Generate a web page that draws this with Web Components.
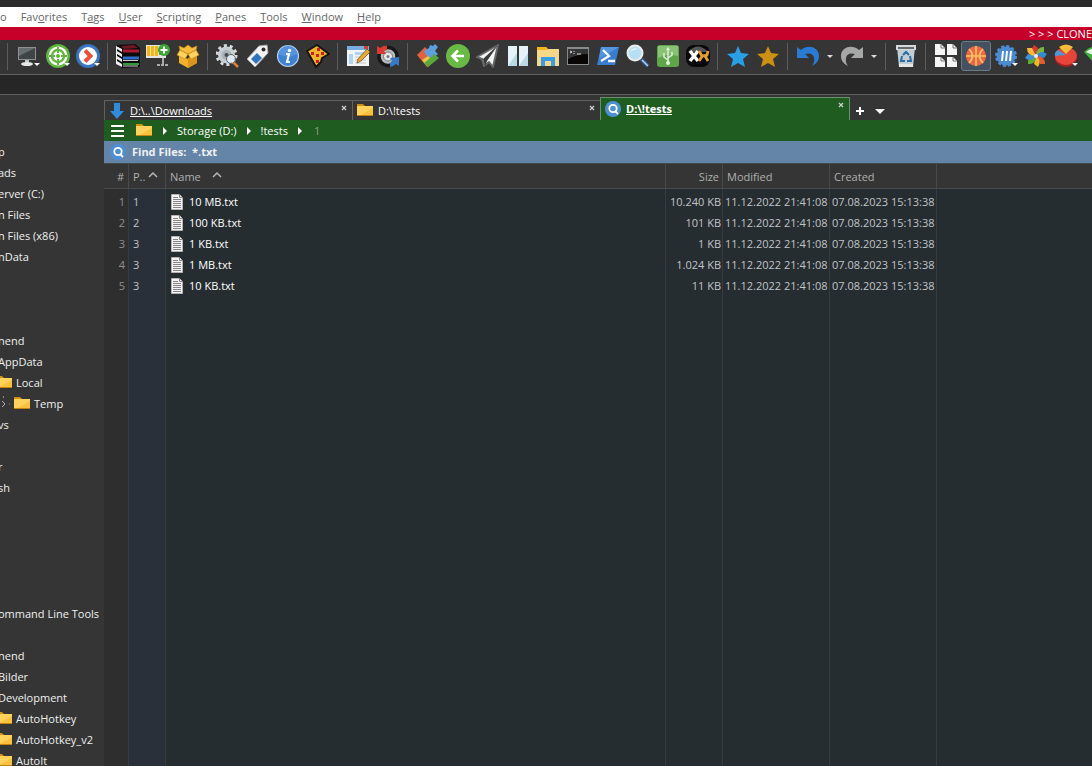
<!DOCTYPE html>
<html lang="en">
<head>
<meta charset="utf-8">
<title>D:\!tests</title>
<style>
  html, body {
    height: 100%;
    margin: 0;
  }
  body {
    overflow: hidden;
    background: #343534;
    color: #f0f0f0;
    font: 11px/16px "Open Sans", "Noto Sans", sans-serif;
  }
</style>
</head>
<body>
<file-manager></file-manager>

<script>
const ICONS = {
  monitor: `<path d="M2 3h18v13H2z" fill="#8d9192"/><path d="M3 4h16v11H3z" fill="#3f4446"/><path d="M3 4h16L3 12z" fill="#686d6f"/><path d="M9 16h4v3H9z" fill="#c5c8c9"/><ellipse cx="11" cy="20" rx="6" ry="2" fill="#e6e8e8"/>`,
  target: `<circle cx="12" cy="12" r="12" fill="#5fb53c"/><circle cx="12" cy="12" r="9.5" fill="#fff"/><circle cx="12" cy="12" r="6" fill="none" stroke="#5fb53c" stroke-width="2.4"/><circle cx="12" cy="12" r="2" fill="#5fb53c"/><path d="M12 3v6M12 15v6M3 12h6M15 12h6" stroke="#5fb53c" stroke-width="2"/>`,
  go: `<circle cx="12" cy="12" r="12" fill="#3777c4"/><circle cx="12" cy="12" r="9" fill="#fff"/><path d="M9 6.5l5.5 5.5L9 17.5" fill="none" stroke="#ea5138" stroke-width="4"/>`,
  books: `<path d="M1 1l18-1 5 4v19l-18 1-5-4z" fill="#0c0c0c"/><path d="M5 2l13-1 4 3-14 1z" fill="#6e1722"/><path d="M0 2l6 3v3L1 5v2l5 3v3l-5-3v2l5 3v3l-5-3v2l5 3v3l-6-3z" fill="#eee"/><path d="M7 7h16" stroke="#b0182f" stroke-width="3"/><path d="M7 14h16" stroke="#2f6fca" stroke-width="3"/><path d="M7 20h16" stroke="#2f9b3a" stroke-width="2"/><path d="M7 16.500h15M7 22h15" stroke="#c9ccce"/>`,
  addfile: `<path d="M0 1h20v13H0z" fill="#e4e4e2"/><path d="M1 2h11v10H1z" fill="#f3b51c"/><path d="M4.500 2v10M8.500 2v10" stroke="#ffe590"/><path d="M13 3h5v8h-5z" fill="#888"/><path d="M17 14v6" stroke="#aaa" stroke-width="2"/><path d="M11 21h12" stroke="#aaa" stroke-width="2" stroke-dasharray="3 1"/><circle cx="18" cy="6" r="6" fill="#3ba535"/><path d="M18 2.500v7M14.500 6h7" stroke="#fff" stroke-width="2"/>`,
  box: `<path d="M3 11l9 4 9-4v8l-9 5-9-5z" fill="#f0b12a"/><path d="M12 14l9-4v9l-9 5z" fill="#dc941b"/><path d="M1 11l3-5 8 4-3 5zM23 11l-3-5-8 4 3 5z" fill="#ffd45c" stroke="#c98a17" stroke-width=".6"/><path d="M4 6L3 2l5 2 4-3 4 3 5-2-1 4-8 4z" fill="#f5bd39" stroke="#c98a17" stroke-width=".6"/>`,
  gear: `<circle cx="10.500" cy="11" r="8.500" fill="#c7ced2"/><circle cx="10.500" cy="11" r="9.500" fill="none" stroke="#d8dee0" stroke-width="3" stroke-dasharray="3 2.970"/><circle cx="10.500" cy="11" r="5" fill="#a9b2b8"/><circle cx="10.500" cy="11" r="2" fill="#454a4d"/><path d="M17 18l5 5" stroke="#db823a" stroke-width="2.500"/><circle cx="15" cy="15" r="4.500" fill="#e6f2fa" fill-opacity=".8" stroke="#5f666b"/>`,
  tag: `<path d="M1 15L13 2l8-1 1 8-13 14z" fill="#f4f4f4" stroke="#a5a8aa"/><path d="M5 15l6-6 5 5-6 6z" fill="#2d75bf"/><circle cx="17.500" cy="5.500" r="2" fill="#2b2b2b"/>`,
  info: `<circle cx="12" cy="12" r="10.500" fill="#3c83d7" stroke="#b7cce8" stroke-width="1.200"/><path d="M3 10a9 9 0 0 1 18 0q-9 5-18 0" fill="#6ba6e8" opacity=".5"/><circle cx="13.500" cy="6.500" r="1.700" fill="#fff"/><path d="M10 10h3l-2 8h3" fill="none" stroke="#fff" stroke-width="2.200"/>`,
  pizza: `<path d="M11 1l12 9-7 4-1 4-5 5L1 7z" fill="#f5b327" stroke="#151515" stroke-width="2" stroke-linejoin="round"/><path d="M11 4h3v3h-3zM5 8h3v3H5zM15 8h3v3h-3zM10 10h3v3h-3zM10 16h3v3h-3z" fill="#cb1f1f"/>`,
  edit: `<path d="M1 2h22v20H1z" fill="#f2f4f5"/><path d="M1 2h22v4H1z" fill="#77aee0"/><path d="M18 2h4v3h-4z" fill="#d83b31"/><path d="M3 10h4v10H3zM9 8h11v3H9z" fill="#aed5f2"/><path d="M9 13h11M9 16h11M9 19h11" stroke="#c5c9cb"/><path d="M11 19l1-4L21 5l3 3-9 9z" fill="#eba92d" stroke="#765216" stroke-width=".8"/>`,
  sync: `<circle cx="12" cy="12.500" r="9" fill="#b9bcbd" stroke="#181818" stroke-width="3.500"/><circle cx="12" cy="12.500" r="4.500" fill="#e8e8e8" stroke="#777"/><circle cx="12" cy="12.500" r="1.500" fill="#777"/><path d="M1 10V2l3 2q4-3 7-2v4l-3 1 2 3z" fill="#dc3931"/><path d="M23 13v9l-3-2q-3 3-6 3v-4l2-2-2-3z" fill="#3778c7"/>`,
  puzzle: `<path d="M1 11l8-8 5 5-3 4 4 5-4 6z" fill="#e3623d"/><path d="M8 7l5-3 1-3 3 1 2-2 3 3-3 4 3 3-7 6-4-4z" fill="#5b9fdf"/><path d="M6 16l6-4 5 5-5 6z" fill="#f0c242"/><path d="M13 15l5-5 5 4-11 9-4-4z" fill="#58a83a"/>`,
  back: `<circle cx="12" cy="12" r="12" fill="#69b945"/><path d="M18 12H7M12 6.500L6.500 12l5.500 5.500" fill="none" stroke="#fff" stroke-width="2.600"/>`,
  plane: `<path d="M22 1L1 13l5 2 2 7 5-4 4 5z" fill="#f4f4f4" stroke="#646667" stroke-width="2" stroke-linejoin="round"/><path d="M22 1L7 15l2 7 2-5z" fill="#3a3a3a"/>`,
  columns: `<path d="M2 2h9v20H2zM13 2h9v20h-9z" fill="#e5f2f8"/><path d="M2 22L11 9v13zM13 22l9-13v13z" fill="#b9d9e6"/>`,
  explorer: `<path d="M1 3h9l2 2h11v17H1z" fill="#f7d788"/><path d="M1 3h9l2 3H1z" fill="#f2b71f"/><path d="M5 13h14v9h-4v-5H9v5H5z" fill="#35a0e8"/>`,
  terminal: `<path d="M1 3h22v18H1z" fill="#858b8d"/><path d="M2 5h20v15H2z" fill="#090606"/><path d="M2 5h20v5q-10 0-20 5z" fill="#353535"/><path d="M4 7l2 1-2 1M8 7v1M8 9v1M11 10h4" fill="none" stroke="#ddd"/>`,
  shell: `<path d="M5 3h18l-4 18H1z" fill="#397dd0"/><path d="M5 3h18L3 15z" fill="#5396df"/><path d="M7 6l6 6-8 5M12 17h7" fill="none" stroke="#fff" stroke-width="2.300"/>`,
  search: `<path d="M15 15l7 7" stroke="#2f5687" stroke-width="4"/><path d="M16 16l6 6" stroke="#b9d0e5" stroke-width="1.500"/><circle cx="9" cy="9" r="7.500" fill="#b8e0f5" stroke="#ececec" stroke-width="2"/><path d="M4 8q3-5 8-3-5 0-8 3" fill="#fff"/>`,
  usb: `<rect x="1" y="1" width="22" height="22" rx="3" fill="#5fa64b"/><path d="M2 2h20v10Q12 8 2 14z" fill="#88c375"/><path d="M12 20V5M12 16l-4-3V9M12 14l4-3V8" fill="none" stroke="#dfedda" stroke-width="1.500"/><circle cx="12" cy="19" r="2" fill="#e5f0e1"/><path d="M10 6l2-3 2 3z" fill="#e5f0e1"/>`,
  tools: `<rect x="0" y="1" width="24" height="22" rx="8" fill="#090909"/><path d="M2 8q10-11 20 0z" fill="#555"/><path d="M4 7l8 10M12 7L4 17" stroke="#fff" stroke-width="3.500"/><path d="M13 7l3 5 5-1 1-4M17 11l-4 6M19 12l3 5" fill="none" stroke="#e3a02c" stroke-width="2.800"/>`,
  bluestar: `<path d="M12 2l3 7 8 1-6 5 2 8-7-4-7 4 2-8-6-5 8-1z" fill="#27a0e8"/>`,
  goldstar: `<path d="M12 2l3 7 8 1-6 5 2 8-7-4-7 4 2-8-6-5 8-1z" fill="#cd9013"/>`,
  undo: `<path d="M1 3v11h12l-4-4q8-2 9 4 1 4-2 8 8-4 7-11C22 3 12 0 5 6z" fill="#2a7bd4"/>`,
  redo: `<path d="M23 3v11H11l4-4q-8-2-9 4-1 4 2 8-8-4-7-11C2 3 12 0 19 6z" fill="#a6a8a8"/>`,
  recycle: `<path d="M3 3h18l-2 20H5z" fill="#c3ced4"/><path d="M2 1h20v5H2z" fill="#d6d9d9"/><path d="M4 3h16v2H4z" fill="#63696b"/><path d="M5 20h14v3H5z" fill="#e5e7e7"/><path d="M9 11l3-3 3 3M16 12l1 5h-4M11 17H7l1-5" fill="none" stroke="#276fa5" stroke-width="2"/>`,
  pages: `<path d="M1 0h6l4 4v7H1zM13 0h6l4 4v7H13zM1 13h6l4 4v6H1zM13 13h6l4 4v6H13z" fill="#f4f4f4"/><path d="M7 0v4h4M19 0v4h4M7 13v4h4M19 13v4h4" fill="none" stroke="#747474"/>`,
  ball: `<circle cx="12" cy="12" r="10" fill="#ee6848"/><path d="M12 2v20M2 12h20M5 5q7 7 0 14M19 5q-7 7 0 14" fill="none" stroke="#fbc45c" stroke-width="1.700"/>`,
  badge: `<circle cx="12" cy="12" r="9.500" fill="#4a8bd3"/><circle cx="12" cy="12" r="9.500" fill="none" stroke="#4a8bd3" stroke-width="3" stroke-dasharray="3 1.970"/><path d="M9 7L8 17M13 7l-1 10M17 7l-1 10" stroke="#fff" stroke-width="2"/>`,
  flower: `<path d="M12 12Q5 7 10 1l4 3z" fill="#e0352e"/><path d="M12 12Q12 3 20 3v5z" fill="#79b63d"/><path d="M12 12q5-7 11-2l-3 4z" fill="#358ad2"/><path d="M12 12q9 0 9 8h-5z" fill="#e45937"/><path d="M12 12q6 5 2 11l-4-3z" fill="#f1b72b"/><path d="M12 12q0 9-8 8v-4z" fill="#63ab39"/><path d="M12 12Q7 19 1 14l3-4z" fill="#3f92d6"/><path d="M12 12Q3 12 3 4h5z" fill="#f2bd38"/><circle cx="12" cy="12" r="2" fill="#eee"/>`,
  pie: `<ellipse cx="12" cy="14" rx="11" ry="9" fill="#a81f1d"/><ellipse cx="12" cy="12" rx="11" ry="9" fill="#e7443a"/><path d="M12 11L1 12Q0 8 4 6z" fill="#4d96d9"/><path d="M12 10L5 3q7-5 14 0z" fill="#f8bd37"/>`,
  gem: `<path d="M0 8q6-6 12-6t12 6L12 21z" fill="#3faf3c"/><path d="M2 8q5-4 10-4t10 4l-10 4z" fill="#eaf6e7"/>`,
  folder: `<path d="M0 1h6l2 2v3H0z" fill="#cf900f"/><path d="M0 3h16v10H0z" fill="#ffd35b"/><path d="M16 5v8H2z" fill="#f8c23c"/><path d="M0 12.500h16" stroke="#c4830e"/>`,
  down: `<path d="M5 0h6v8h4l-7 8-7-8h4z" fill="#2d8ce0"/>`,
  find: `<circle cx="8" cy="8" r="8" fill="#4f8fd4"/><circle cx="8" cy="7.500" r="3.700" fill="none" stroke="#fff" stroke-width="1.800"/><path d="M10 10l3 3" stroke="#fff" stroke-width="1.800"/>`,
  text: `<path d="M1.500 .5h8l3 3v12h-11z" fill="#f4f4f4" stroke="#b5b5b5"/><path d="M3 3.500h5M3 5.500h8M3 7.500h8M3 9.500h8M3 11.500h8M3 13.500h8" stroke="#858585"/><path d="M9.500 0v3.500H13" fill="none" stroke="#858585"/>`,
  bars: `<path d="M1 3h13M1 8h13M1 13h13" stroke="#fff" stroke-width="2"/>`,
  plus: `<path d="M8 4v8M4 8h8" stroke="#fff" stroke-width="2"/>`,
  caret: `<path d="M3 6h10l-5 5z" fill="#fff"/>`,
  next: `<path d="M6 4v8l4-4z" fill="#fff"/>`,
  sort: `<path d="M4 8l4-4 4 4" fill="none" stroke="#b5b5b5" stroke-width="1.500"/>`,
  close: `<path d="M6 5l4 4M10 5l-4 4" stroke="#d0d0d0" stroke-width="1.200"/>`,
  branch: `<path d="M7.500 0v2M13 8h1" stroke="#888"/><path d="M6 5l3 3-3 3" fill="none" stroke="#b5b5b5"/>`
};

class AppIcon extends HTMLElement {
  connectedCallback() {
    const size = this.getAttribute('size') || 16;
    this.attachShadow({ mode: 'open' }).innerHTML = `
      <style>
        :host { display: block; flex: none; }
        svg { display: block; }
      </style>
      <svg width="${size}" height="${size}" viewBox="0 0 ${size} ${size}" aria-hidden="true">${ICONS[this.getAttribute('name')]}</svg>
    `;
  }
}
customElements.define('app-icon', AppIcon);

class MenuBar extends HTMLElement {
  connectedCallback() {
    const items = ['o', 'Fav<u>o</u>rites', 'T<u>a</u>gs', '<u>U</u>ser', '<u>S</u>cripting', '<u>P</u>anes', '<u>T</u>ools', '<u>W</u>indow', '<u>H</u>elp'];
    this.attachShadow({ mode: 'open' }).innerHTML = `
      <style>
        :host {
          display: block;
          background: #fff;
          border-top: 7px solid #2b2b2b;
        }
        nav { display: flex; gap: 14px; height: 20px; }
        button {
          border: 0;
          padding: 0;
          background: none;
          color: #666;
          font: 11px/20px "Open Sans", sans-serif;
        }
      </style>
      <nav>${items.map(item => `<button>${item}</button>`).join('')}</nav>
    `;
  }
}
customElements.define('menu-bar', MenuBar);

class ToolButton extends HTMLElement {
  connectedCallback() {
    const name = this.getAttribute('icon');
    this.attachShadow({ mode: 'open' }).innerHTML = `
      <style>
        :host { display: block; flex: none; }
        button {
          position: relative;
          display: grid;
          place-items: center;
          width: 30px;
          height: 30px;
          padding: 0;
          border: 1px solid transparent;
          border-radius: 3px;
          background: none;
        }
        :host([active]) button { background: #435260; border-color: #6c7b88; }
        .drop {
          position: absolute;
          right: 2px;
          bottom: 4px;
          border: 3px solid transparent;
          border-top-color: #fff;
          border-bottom: 0;
        }
      </style>
      <button aria-label="${name}">
        <app-icon name="${name}" size="24"></app-icon>
        ${this.hasAttribute('menu') ? '<span class="drop"></span>' : ''}
      </button>
    `;
  }
}
customElements.define('tool-button', ToolButton);

class ToolBar extends HTMLElement {
  connectedCallback() {
    // "|" separator, "v" split arrow, "*" menu arrow on the icon, "!" pressed
    const layout = '| monitor* target* go* | books addfile box | gear tag info pizza | edit sync | puzzle back plane columns explorer terminal shell search usb tools | bluestar goldstar | undo v redo v | recycle | pages ball! badge* flower pie* gem';
    const items = layout.split(' ').map(item => {
      if (item === '|') return '<i class="line"></i>';
      if (item === 'v') return '<button class="split" aria-label="History"></button>';
      const flags = (item.endsWith('*') ? 'menu' : '') + (item.endsWith('!') ? 'active' : '');
      return `<tool-button icon="${item.replace(/[*!]/, '')}" ${flags}></tool-button>`;
    });
    this.attachShadow({ mode: 'open' }).innerHTML = `
      <style>
        :host {
          display: block;
          background: #343534;
          border-bottom: 1px solid #606060;
        }
        .notice {
          height: 13px;
          padding-left: 8px;
          background: #c60029;
          color: #fff;
          line-height: 13px;
          text-align: right;
          white-space: nowrap;
        }
        .tools {
          display: flex;
          align-items: center;
          padding: 1px 0 3px 3px;
          overflow: hidden;
        }
        .line {
          flex: none;
          width: 1px;
          height: 27px;
          margin: 0 5px 0 4px;
          background: #5c5c5c;
        }
        .split {
          flex: none;
          width: 14px;
          height: 30px;
          padding: 0;
          border: 0;
          background: none;
          display: grid;
          place-items: center;
        }
        .split::before {
          content: "";
          border: 3px solid transparent;
          border-top-color: #ddd;
          border-bottom: 0;
        }
      </style>
      <div class="notice">&gt; &gt; &gt; CLONE</div>
      <div class="tools">${items.join('')}</div>
    `;
  }
}
customElements.define('tool-bar', ToolBar);

class FolderTree extends HTMLElement {
  connectedCallback() {
    const rows = ['p', 'ads', 'erver (C:)', 'n Files', 'n Files (x86)', 'nData', '', '', '', 'nend', 'AppData', '+Local', '>Temp', 'vs', '', 'r', 'sh', '', '', '', '', '', 'ommand Line Tools', '', 'nend', 'Bilder', 'Development', '+AutoHotkey', '+AutoHotkey_v2', '+AutoIt'];
    const html = rows.map(row => {
      if (row[0] === '+') return `<li class="folder"><app-icon name="folder"></app-icon>${row.slice(1)}</li>`;
      if (row[0] === '>') return `<li class="folder"><app-icon name="branch"></app-icon><app-icon name="folder"></app-icon>${row.slice(1)}</li>`;
      return `<li>${row}</li>`;
    });
    this.attachShadow({ mode: 'open' }).innerHTML = `
      <style>
        :host {
          display: block;
          overflow: hidden;
          background: #343534;
        }
        ul {
          list-style: none;
          margin: 0 0 0 -2px;
          padding: 46px 0 0;
        }
        li {
          display: flex;
          align-items: center;
          height: 21px;
          white-space: nowrap;
        }
        .folder { gap: 4px; margin-left: -2px; }
        .folder app-icon + app-icon { margin-left: -2px; }
      </style>
      <ul>${html.join('')}</ul>
    `;
  }
}
customElements.define('folder-tree', FolderTree);

class FolderTab extends HTMLElement {
  connectedCallback() {
    this.attachShadow({ mode: 'open' }).innerHTML = `
      <style>
        :host {
          display: flex;
          box-sizing: border-box;
          width: 248px;
          height: 20px;
          border: 1px solid #606260;
          border-width: 1px 0 0 1px;
          padding-left: 4px;
        }
        :host([active]) {
          width: 250px;
          height: 23px;
          background: #1f5c1f;
          border-color: #6a8f6a;
          border-right-width: 1px;
          font-weight: bold;
        }
        button {
          display: flex;
          align-items: center;
          border: 0;
          padding: 0;
          background: none;
          color: #fff;
          font: inherit;
        }
        .label { flex: 1; gap: 5px; }
        .close { align-self: flex-start; }
        :host([linked]) .text { text-decoration: underline; }
      </style>
      <button class="label"><app-icon name="${this.getAttribute('icon')}"></app-icon><span class="text"><slot></slot></span></button>
      <button class="close" aria-label="Close tab"><app-icon name="close"></app-icon></button>
    `;
  }
}
customElements.define('folder-tab', FolderTab);

class PathBar extends HTMLElement {
  connectedCallback() {
    this.attachShadow({ mode: 'open' }).innerHTML = `
      <style>
        :host { display: block; }
        div { display: flex; align-items: center; padding-left: 6px; }
        .path { height: 21px; gap: 4px; background: #1f5c1f; }
        .path .root { margin: 0 1px 0 6px; }
        a { color: #fff; text-decoration: none; }
        a:last-child { color: #85a285; margin-left: 2px; }
        .find { height: 22px; gap: 6px; background: #6485a8; font-weight: bold; }
        .find span { white-space: pre; }
      </style>
      <div class="path">
        <app-icon name="bars"></app-icon>
        <app-icon class="root" name="folder"></app-icon>
        <app-icon name="next"></app-icon>
        <a href="#">Storage (D:)</a>
        <app-icon name="next"></app-icon>
        <a href="#">!tests</a>
        <app-icon name="next"></app-icon>
        <a href="#">1</a>
      </div>
      <div class="find"><app-icon name="find"></app-icon><span>Find Files:  *.txt</span></div>
    `;
  }
}
customElements.define('path-bar', PathBar);

class FileList extends HTMLElement {
  connectedCallback() {
    const files = [
      [1, '10 MB.txt', '10.240 KB'],
      [2, '100 KB.txt', '101 KB'],
      [3, '1 KB.txt', '1 KB'],
      [3, '1 MB.txt', '1.024 KB'],
      [3, '10 KB.txt', '11 KB']
    ];
    const rows = files.map(([part, name, size], i) => `
      <tr>
        <td class="num">${i + 1}</td><td>${part}</td>
        <td class="name"><span><app-icon name="text"></app-icon>${name}</span></td>
        <td class="size">${size}</td><td class="date">11.12.2022 21:41:08</td><td class="date">07.08.2023 15:13:38</td><td></td>
      </tr>`);
    this.attachShadow({ mode: 'open' }).innerHTML = `
      <style>
        :host { display: block; flex: 1; min-height: 0; }
        table {
          width: 100%;
          height: 100%;
          table-layout: fixed;
          border-collapse: separate;
          border-spacing: 0;
          background: #262d30;
        }
        th, td {
          box-sizing: border-box;
          border-right: 1px solid #353b3e;
          text-align: left;
          white-space: nowrap;
          font-weight: normal;
        }
        th {
          height: 26px;
          padding: 2px 4px 0;
          border: 1px solid #484a4a;
          border-left: 0;
          background: #343534;
          color: #b0b0b0;
        }
        th:last-child, td:last-child { border-right: 0; }
        th span, td span { display: flex; align-items: center; }
        td {
          height: 21px;
          padding: 5px 0 0 4px;
          color: #c0c4c8;
        }
        td:nth-child(1) { background: #2e2e2e; color: #8e8e8e; }
        td:nth-child(2) { background: #29303a; }
        td.num { padding-right: 3px; }
        .num, .size { text-align: right; }
        td.size { padding-right: 1px; }
        td.date { padding-left: 2px; }
        th.size { padding-right: 3px; }
        .name span { gap: 3px; color: #fff; }
        th.name span { gap: 8px; color: #b0b0b0; }
        tr.rest td { height: auto; padding: 0; }
      </style>
      <table>
        <colgroup>
          <col style="width: 25px"><col style="width: 37px"><col style="width: 500px">
          <col style="width: 57px"><col style="width: 107px"><col style="width: 107px"><col>
        </colgroup>
        <thead>
          <tr>
            <th class="num">#</th>
            <th><span>P..<app-icon name="sort"></app-icon></span></th>
            <th class="name"><span>Name<app-icon name="sort"></app-icon></span></th>
            <th class="size">Size</th><th>Modified</th><th>Created</th><th></th>
          </tr>
        </thead>
        <tbody>
          ${rows.join('')}
          <tr class="rest">${'<td></td>'.repeat(7)}</tr>
        </tbody>
      </table>
    `;
  }
}
customElements.define('file-list', FileList);

class FileManager extends HTMLElement {
  connectedCallback() {
    this.attachShadow({ mode: 'open' }).innerHTML = `
      <style>
        :host { display: flex; flex-direction: column; height: 100%; }
        .gap { flex: none; height: 19px; background: #262626; border-bottom: 1px solid #606060; }
        main { flex: 1; min-height: 0; display: grid; grid-template-columns: 104px 1fr; }
        section { display: flex; flex-direction: column; min-width: 0; min-height: 0; }
        .tabs { display: flex; align-items: flex-end; height: 25px; }
        .tabs button { border: 0; padding: 1px 2px; background: none; }
      </style>
      <menu-bar></menu-bar>
      <tool-bar></tool-bar>
      <div class="gap"></div>
      <main>
        <folder-tree></folder-tree>
        <section>
          <div class="tabs">
            <folder-tab icon="down" linked>D:\\..\\Downloads</folder-tab>
            <folder-tab icon="folder">D:\\!tests</folder-tab>
            <folder-tab icon="find" active linked>D:\\!tests</folder-tab>
            <button aria-label="New tab"><app-icon name="plus"></app-icon></button>
            <button aria-label="Tab list"><app-icon name="caret"></app-icon></button>
          </div>
          <path-bar></path-bar>
          <file-list></file-list>
        </section>
      </main>
    `;
  }
}
customElements.define('file-manager', FileManager);
</script>
</body>
</html>
